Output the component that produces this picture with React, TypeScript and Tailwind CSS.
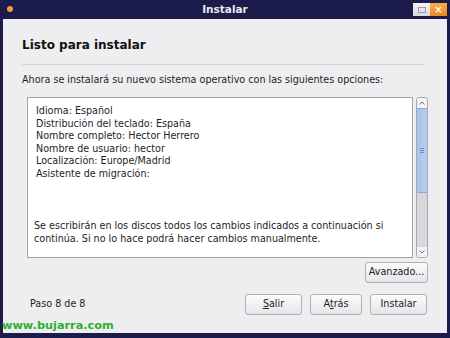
import React from "react";

export default function App() {
  const font = { fontFamily: '"DejaVu Sans", "Liberation Sans", sans-serif' };
  const lines = [
    "Idioma: Español",
    "Distribución del teclado: España",
    "Nombre completo: Hector Herrero",
    "Nombre de usuario: hector",
    "Localización: Europe/Madrid",
    "Asistente de migración:",
  ];
  const btn =
    "h-[21px] text-[9.6px] rounded-[3px] border border-[#b0b0b8] bg-gradient-to-b from-[#fbfbfb] to-[#e6e6ea] text-[#222]";
  return (
    <div className="w-[450px] h-[338px] bg-[#1c1c4c] flex flex-col overflow-hidden relative" style={font}>
      {/* title bar */}
      <div className="h-[19px] flex items-center relative shrink-0">
        <div className="absolute left-[7px] top-[6px] w-[6px] h-[6px] rounded-full bg-[#f0a040]" />
        <div className="flex-1 text-center text-[10.5px] font-bold text-[#e8e8f0] leading-none">Instalar</div>
        <div className="absolute right-[3px] top-[3px] flex">
          <div className="w-[17px] h-[13px] bg-gradient-to-b from-[#f4f4f4] to-[#d8d8e0] flex items-center justify-center">
            <div className="w-[8px] h-[6px] border border-[#9a9aa8]" />
          </div>
          <div className="w-[17px] h-[13px] bg-gradient-to-b from-[#f8b040] to-[#e88820] flex items-center justify-center text-white text-[10px] font-bold leading-none">×</div>
        </div>
      </div>
      {/* body */}
      <div className="mx-[3px] h-[314px] bg-[#eeeef0] flex flex-col px-[19px] text-[#1e1e1e]">
        <div className="pt-[18px] pb-[10px] text-[12px] font-bold leading-[17px] text-[#111]">Listo para instalar</div>
        <div className="h-px bg-[#d4d4d8] mr-[3px]" />
        <div className="mt-[8px] text-[9.6px] leading-[13px]">Ahora se instalará su nuevo sistema operativo con las siguientes opciones:</div>
        <div className="mt-[11px] flex gap-[3px] h-[161px]">
          <div className="ml-[5px] w-[387px] bg-white border border-[#a0a0a8] flex flex-col text-[9.6px] leading-[12.5px]">
            <div className="pl-[8px] pt-[7px]">
              {lines.map((l) => (
                <div key={l}>{l}</div>
              ))}
            </div>
            <div className="pl-[6px] mt-[40px]">
              <div>Se escribirán en los discos todos los cambios indicados a continuación si</div>
              <div>continúa. Si no lo hace podrá hacer cambios manualmente.</div>
            </div>
          </div>
          <div className="w-[12px] flex flex-col border border-[#a8a8b0] rounded-[3px] bg-[#d8d8dc] overflow-hidden">
            <div className="h-[10px] bg-[#f4f4f6] flex items-center justify-center">
              <svg width="6" height="4" viewBox="0 0 6 4"><path d="M0.5 3.5 L3 1 L5.5 3.5" fill="none" stroke="#777" strokeWidth="1" /></svg>
            </div>
            <div className="h-[85px] bg-gradient-to-r from-[#a8c4ea] to-[#b8d0f0] border-y border-[#8aaad8] flex items-center justify-center">
              <div className="flex flex-col gap-[1px]">
                <div className="w-[4px] h-px bg-[#7090c0]" />
                <div className="w-[4px] h-px bg-[#7090c0]" />
                <div className="w-[4px] h-px bg-[#7090c0]" />
              </div>
            </div>
            <div className="flex-1" />
            <div className="h-[10px] bg-[#f4f4f6] flex items-center justify-center">
              <svg width="6" height="4" viewBox="0 0 6 4"><path d="M0.5 0.5 L3 3 L5.5 0.5" fill="none" stroke="#777" strokeWidth="1" /></svg>
            </div>
          </div>
        </div>
        <div className="mt-[4px] flex justify-end">
          <button className={`w-[63px] ${btn}`}>Avanzado...</button>
        </div>
        <div className="mt-[11px] flex items-center">
          <div className="pl-[8px] text-[9.6px] flex-1">Paso 8 de 8</div>
          <div className="flex gap-[8px]">
            <button className={`w-[57px] ${btn}`}><span className="underline">S</span>alir</button>
            <button className={`w-[52px] ${btn}`}>A<span className="underline">t</span>rás</button>
            <button className={`w-[57px] ${btn} border-[#8a9ab8] mr-[1px]`}>Instalar</button>
          </div>
        </div>
      </div>
      <div className="absolute left-[2px] top-[318px] text-[11.3px] leading-[16px] text-[#30b030] font-semibold">www.bujarra.com</div>
    </div>
  );
}
